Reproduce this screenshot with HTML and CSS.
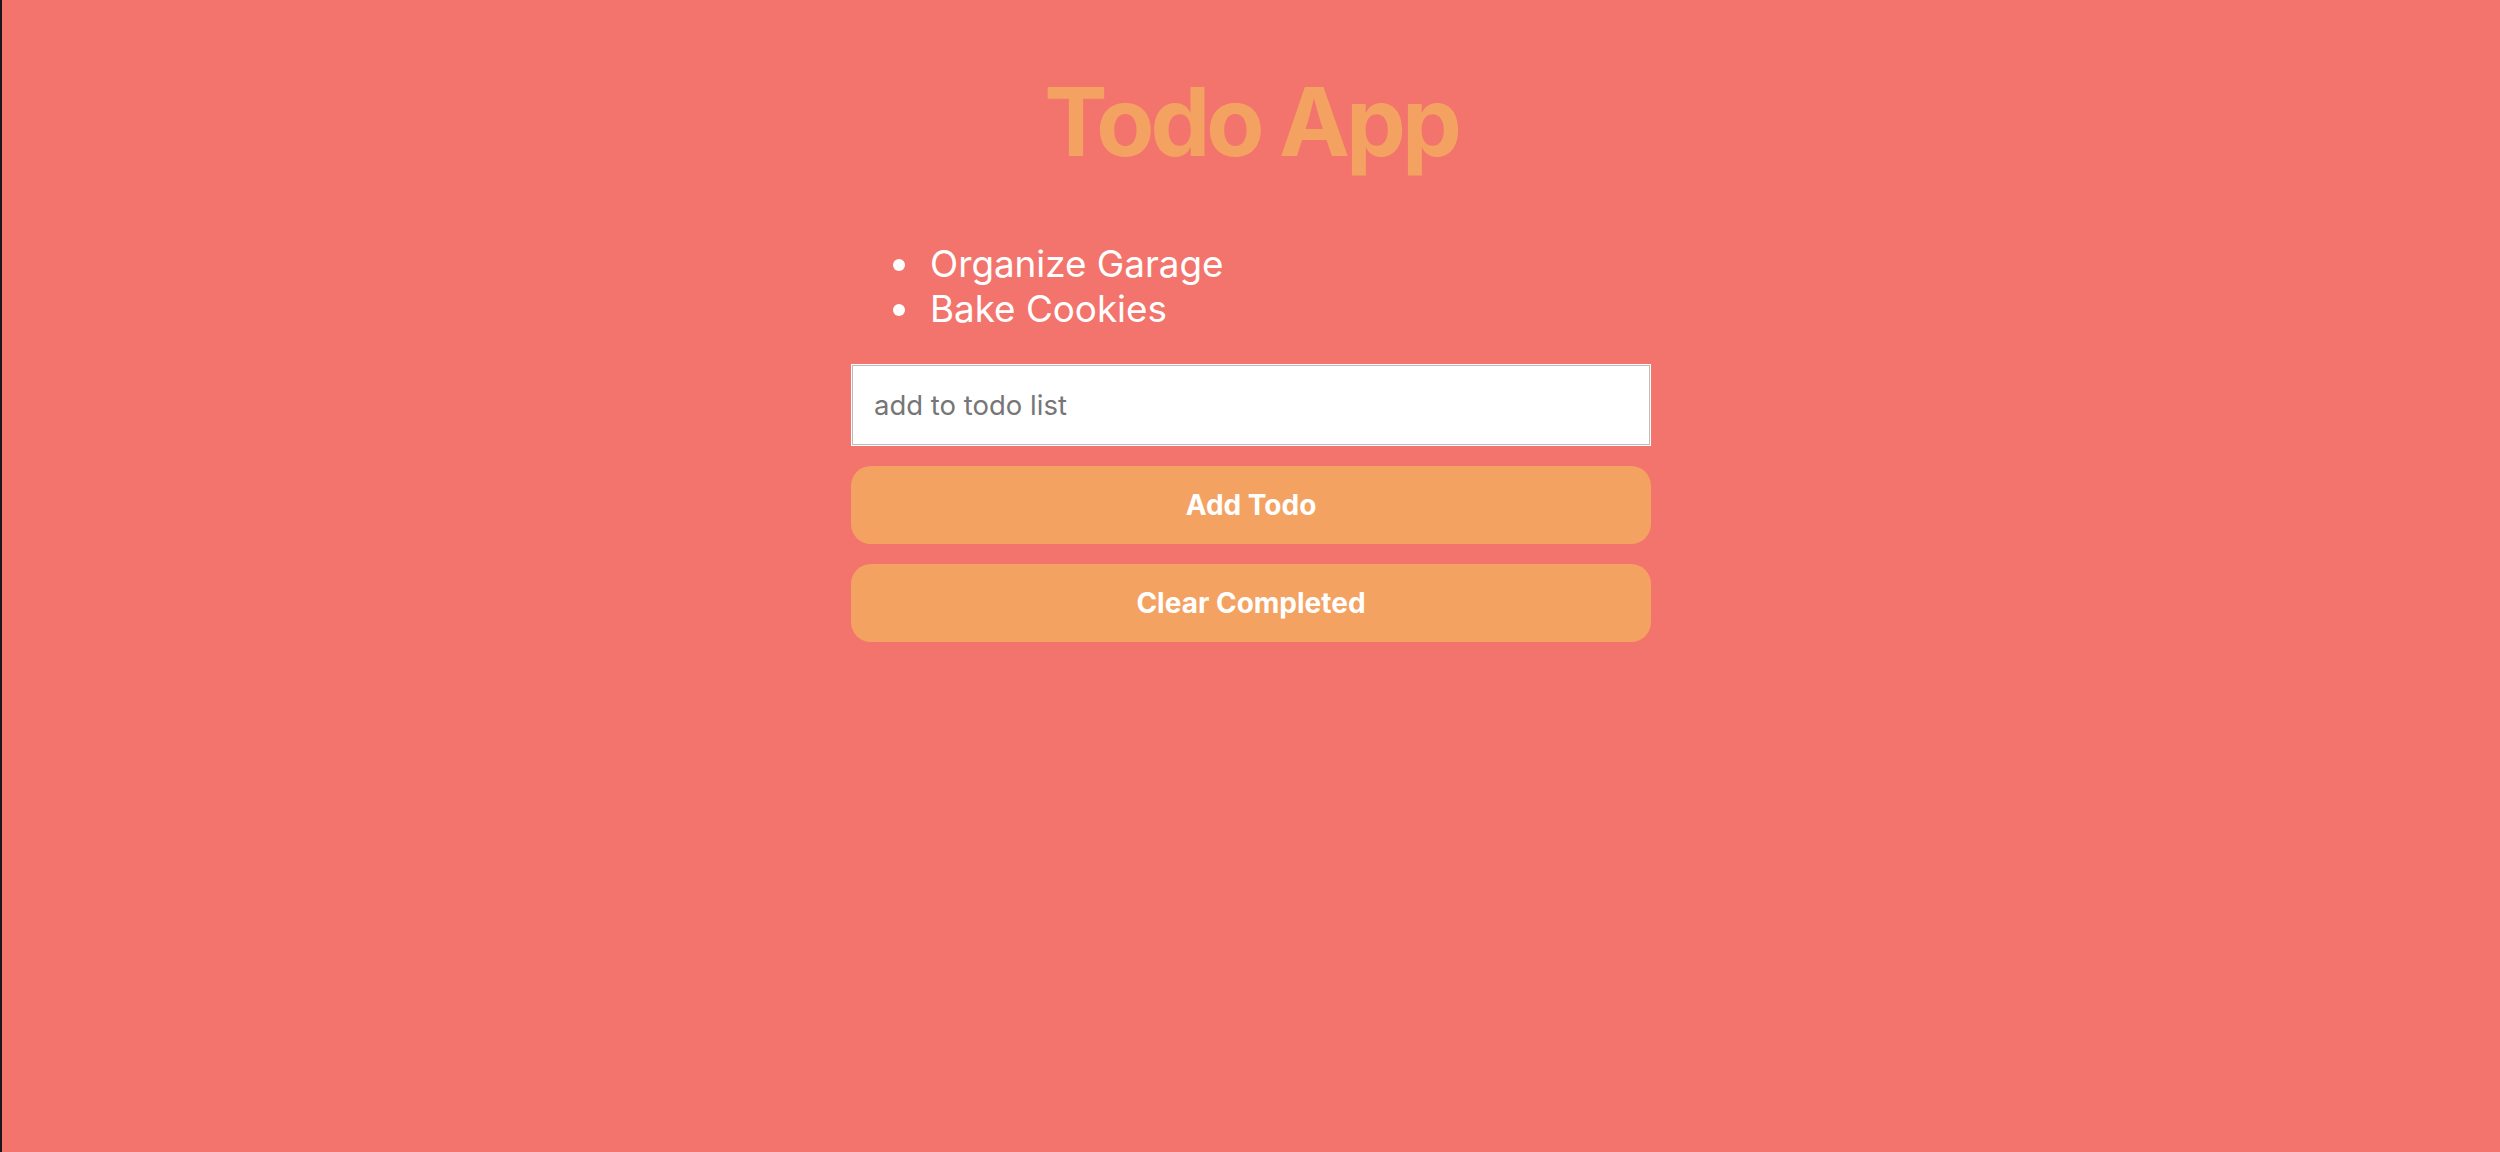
FILE: index.html
```html
<!DOCTYPE html>
<html lang="en">
<head>
<meta charset="utf-8">
<title>Todo App</title>
<link rel="stylesheet" href="styles.css">
</head>
<body>
<div class="edge"></div>
<main class="app">
  <h1 class="title">Todo App</h1>
  <ul class="todos">
    <li>Organize Garage</li>
    <li>Bake Cookies</li>
  </ul>
  <input class="todo-input" type="text" placeholder="add to todo list">
  <button class="btn" type="button">Add Todo</button>
  <button class="btn" type="button">Clear Completed</button>
</main>
</body>
</html>
```
FILE: styles.css
```css
html, body {
  margin: 0;
  padding: 0;
  height: 100%;
}
body {
  background: #f3746c;
  font-family: Inter, "Liberation Sans", sans-serif;
  display: flex;
  min-height: 100vh;
}
.edge {
  width: 2px;
  flex: 0 0 2px;
  background: #16161c;
}
.app {
  flex: 1;
  display: flex;
  flex-direction: column;
  align-items: center;
  padding-top: 74px;
}
.title {
  margin: 0;
  font-size: 95px;
  line-height: 96px;
  font-weight: 700;
  color: #f4a261;
  letter-spacing: -4px;
}
.todos {
  width: 800px;
  box-sizing: border-box;
  margin: 71px 0 33px;
  padding-left: 73px;
  color: #fff;
  font-size: 36.8px;
  line-height: 45px;
}
.todos li {
  padding-left: 6px;
}
.todo-input {
  width: 800px;
  height: 82px;
  box-sizing: border-box;
  margin: 0;
  padding: 0 22px;
  border: 1px solid #fff;
  box-shadow: inset 0 0 0 1px #bcbcbc;
  background: #fff;
  font-family: inherit;
  font-size: 27.5px;
  color: #333;
  outline: none;
}
.todo-input::placeholder {
  color: #767676;
}
.btn {
  width: 800px;
  height: 78px;
  margin-top: 20px;
  border: 0;
  border-radius: 20px;
  background: #f4a261;
  color: #fff;
  font-family: inherit;
  font-size: 28px;
  font-weight: 700;
  cursor: pointer;
}
```
